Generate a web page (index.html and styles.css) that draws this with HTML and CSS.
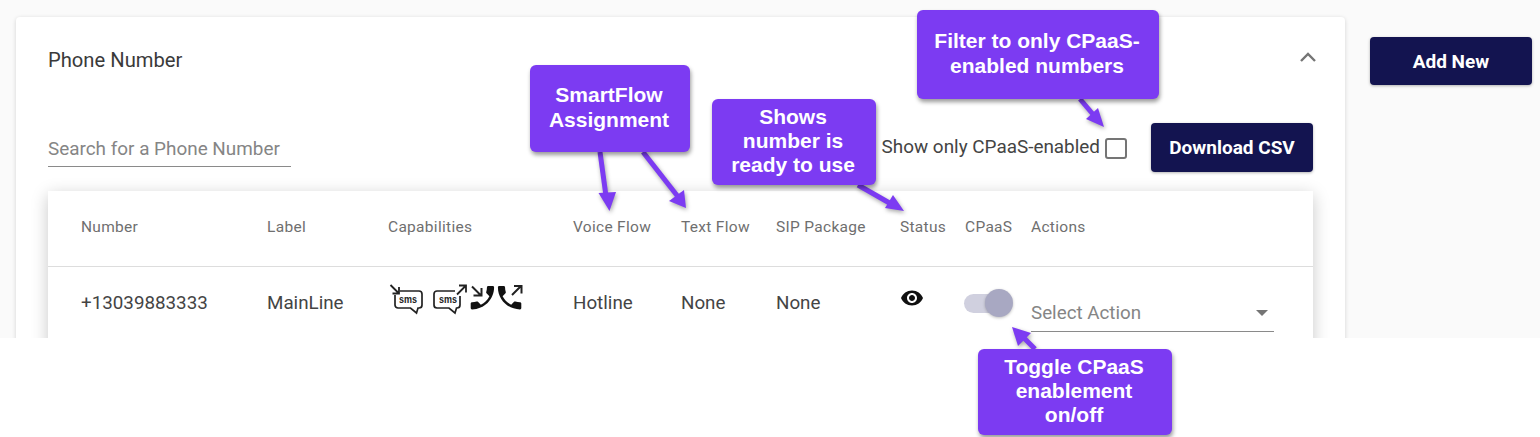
FILE: index.html
```html
<!DOCTYPE html>
<html lang="en">
<head>
<meta charset="utf-8">
<title>Phone Number</title>
<link rel="stylesheet" href="styles.css">
</head>
<body>
<div class="shell">
  <main class="card">
    <header class="card-head">
      <h2 class="title">Phone Number</h2>
      <svg class="chevron" viewBox="0 0 16 10"><path d="M1 9l7-7 7 7" fill="none" stroke="#757575" stroke-width="2.4"/></svg>
    </header>
    <div class="toolbar">
      <div class="search">Search for a Phone Number</div>
      <div class="tools">
        <span class="filter-label">Show only CPaaS-enabled</span>
        <span class="checkbox"></span>
        <button class="btn btn-csv">Download CSV</button>
      </div>
    </div>
    <section class="table">
      <div class="grid head-row">
        <span>Number</span><span>Label</span><span>Capabilities</span><span>Voice Flow</span><span>Text Flow</span><span>SIP Package</span><span>Status</span><span>CPaaS</span><span>Actions</span>
      </div>
      <div class="grid body-row">
        <span>+13039883333</span>
        <span>MainLine</span>
        <span class="caps">
          <svg class="caps-svg" viewBox="0 0 140 34">
            <g fill="none" stroke="#222" stroke-width="1.700">
              <path d="M12 8H31a3 3 0 0 1 3 3V22a3 3 0 0 1-3 3H30l-1.500 5-6-5H10a3 3 0 0 1-3-3V12"/>
              <path d="M2.500 2l8 8M4.500 10.500H11V4" stroke-width="1.800"/>
              <path d="M46 11a3 3 0 0 1 3-3H67M72 13V22a3 3 0 0 1-3 3H68.500l-1.500 5-6-5H49a3 3 0 0 1-3-3V11"/>
              <path d="M69 11.500l9-9M71 2.500H78V9.500" stroke-width="1.800"/>
              <path d="M84 3.500l8.500 8.500M85.500 12.500H93.500V5" stroke-width="2"/>
              <path d="M124 12l8.500-8.500M126 3H133.500V10.500" stroke-width="2"/>
            </g>
            <text class="sms" x="20" y="20" textLength="18" lengthAdjust="spacingAndGlyphs">sms</text>
            <text class="sms" x="60" y="20" textLength="18" lengthAdjust="spacingAndGlyphs">sms</text>
            <g fill="#111">
              <path transform="translate(110 -0.900) scale(-1.300 1.300)" d="M6.620 10.790c1.440 2.830 3.760 5.140 6.590 6.590l2.200-2.200c.27-.27.67-.36 1.020-.24 1.120.37 2.330.57 3.570.57.55 0 1 .45 1 1V20c0 .55-.45 1-1 1-9.390 0-17-7.610-17-17 0-.55.45-1 1-1h3.500c.55 0 1 .45 1 1 0 1.250.2 2.450.57 3.570.11.350.03.740-.25 1.020l-2.200 2.200z"/>
              <path transform="translate(106 -0.900) scale(1.300 1.300)" d="M6.620 10.790c1.440 2.830 3.760 5.140 6.590 6.590l2.200-2.200c.27-.27.67-.36 1.020-.24 1.120.37 2.330.57 3.570.57.55 0 1 .45 1 1V20c0 .55-.45 1-1 1-9.390 0-17-7.610-17-17 0-.55.45-1 1-1h3.500c.55 0 1 .45 1 1 0 1.250.2 2.450.57 3.570.11.350.03.740-.25 1.020l-2.200 2.200z"/>
            </g>
          </svg>
        </span>
        <span>Hotline</span>
        <span>None</span>
        <span>None</span>
        <span class="status">
          <svg class="eye" viewBox="0 0 24 24"><path fill="#111" d="M12 4.500C7 4.500 2.730 7.610 1 12c1.730 4.390 6 7.500 11 7.500s9.270-3.110 11-7.500c-1.730-4.390-6-7.500-11-7.500zM12 17c-2.760 0-5-2.240-5-5s2.240-5 5-5 5 2.240 5 5-2.240 5-5 5zm0-8c-1.660 0-3 1.340-3 3s1.340 3 3 3 3-1.340 3-3-1.340-3-3-3z"/></svg>
        </span>
        <span class="toggle"><i class="track"></i><i class="thumb"></i></span>
        <span class="select"><span>Select Action</span><i class="caret"></i></span>
      </div>
    </section>
  </main>
  <aside class="side"><button class="btn btn-add">Add New</button></aside>
</div>

<svg class="arrows" viewBox="0 0 1540 437">
  <g fill="#7c3bf2" stroke="#7c3bf2" class="arrow-g">
    <path d="M600 152L606 196" stroke-width="5" fill="none"/><path d="M598.500 193L616 192L609.500 211z" stroke="none"/>
    <path d="M643 152L679 198" stroke-width="5" fill="none"/><path d="M669 201L684 190L686 208z" stroke="none"/>
    <path d="M858 185L893 205" stroke-width="5" fill="none"/><path d="M885 208L893 195L904 211z" stroke="none"/>
    <path d="M1080 99L1097 119" stroke-width="5" fill="none"/><path d="M1086 119L1098 108L1104 127z" stroke="none"/>
    <path d="M1035 349L1020 334" stroke-width="5" fill="none"/><path d="M1012 327L1031 333L1018 346z" stroke="none"/>
  </g>
</svg>

<div class="callout c-flow">SmartFlow<br>Assignment</div>
<div class="callout c-status">Shows<br>number is<br>ready to use</div>
<div class="callout c-filter">Filter to only CPaaS-<br>enabled numbers</div>
<div class="callout c-toggle">Toggle CPaaS<br>enablement<br>on/off</div>
</body>
</html>
```

FILE: styles.css
```css
* { box-sizing: border-box; }
html, body { margin: 0; background: #fff; }
body { position: relative; width: 1540px; height: 437px; overflow: hidden; font-family: Roboto, sans-serif; color: #333; }

.shell { display: flex; height: 338px; overflow: hidden; background: #fafafa; padding: 17px 8px 0 16px; }

.card { width: 1329px; height: 400px; background: #fff; border-radius: 4px; box-shadow: 0 1px 4px rgba(0,0,0,.16); flex: none; }
.card-head { height: 86px; padding: 0 29px 0 32px; display: flex; align-items: center; justify-content: space-between; }
.title { margin: 0; font-size: 20.200px; font-weight: 400; color: #3a3a3a; }
.chevron { width: 16px; height: 10px; margin-top: -7px; }

.toolbar { height: 88px; padding: 20px 32px 0; display: flex; justify-content: space-between; align-items: flex-start; }
.search { width: 243px; height: 44px; padding-top: 15px; font-size: 18.900px; line-height: 22px; color: #858585; border-bottom: 1px solid #8a8a8a; }
.tools { display: flex; align-items: center; height: 49px; }
.filter-label { font-size: 18.900px; color: #444; margin-top: -2px; }
.checkbox { width: 22px; height: 21px; margin: 1px 24px 0 5px; border: 2px solid #757575; border-radius: 3px; background: #fff; }

.btn { border: 0; border-radius: 4px; background: #131450; color: #fff; font-family: Roboto, sans-serif; font-size: 19px; font-weight: 700; box-shadow: 0 1px 3px rgba(0,0,0,.3); padding: 0; }
.btn-csv { width: 162px; height: 49px; }
.side { margin: 20px 0 0 25px; }
.btn-add { width: 162px; height: 48px; }

.table { margin: 0 32px; height: 300px; background: #fff; box-shadow: 0 4px 16px rgba(0,0,0,.22); }
.grid { display: grid; grid-template-columns: 186px 121px 185px 108px 95px 124px 65px 66px 1fr; padding-left: 33px; }
.head-row { height: 76px; align-items: center; border-bottom: 1px solid #ddd; font-size: 15.500px; font-weight: 400; color: #6f6f6f; letter-spacing: .3px; padding-bottom: 3px; }
.body-row { height: 74px; align-items: center; font-size: 18.800px; color: #444; padding-bottom: 2px; }

.caps { display: flex; }
.caps-svg { width: 140px; height: 34px; margin: -6px 0 0 0; flex: none; }
.sms { font-family: "Liberation Sans", sans-serif; font-size: 11px; font-weight: 700; fill: #222; text-anchor: middle; }
.status { display: flex; }
.eye { width: 24px; height: 24px; margin: -10px 0 0 0; }

.toggle { position: relative; display: block; width: 50px; height: 28px; margin-top: -1px; }
.track { position: absolute; left: -1px; top: 5px; width: 36px; height: 19px; border-radius: 10px; background: #d0d0df; }
.thumb { position: absolute; left: 20px; top: 0; width: 28px; height: 28px; border-radius: 50%; background: #a8a8c2; box-shadow: 0 1px 3px rgba(0,0,0,.25); }

.select { display: flex; align-items: center; justify-content: space-between; width: 243px; height: 40px; margin-top: 17px; padding: 4px 6px 0 0; border-bottom: 1px solid #8a8a8a; color: #858585; font-size: 18.800px; }
.caret { width: 0; height: 0; border-left: 6.500px solid transparent; border-right: 6.500px solid transparent; border-top: 6.500px solid #757575; }

.arrows { position: absolute; left: 0; top: 0; width: 1540px; height: 437px; filter: drop-shadow(1px 2px 2px rgba(0,0,0,.35)); }

.callout { position: absolute; display: flex; align-items: center; justify-content: center; text-align: center; background: #7c3bf2; color: #fff; border-radius: 6px; padding: 0 2px 2px 0; font-family: "Liberation Sans", sans-serif; font-weight: 700; font-size: 21px; line-height: 24.300px; box-shadow: 1px 3px 4px rgba(0,0,0,.4); }
.c-flow { left: 530px; top: 65px; width: 160px; height: 87px; }
.c-status { left: 712px; top: 99px; width: 164px; height: 86px; }
.c-filter { left: 917px; top: 10px; width: 242px; height: 89px; }
.c-toggle { left: 978px; top: 349px; width: 194px; height: 86px; }
```
